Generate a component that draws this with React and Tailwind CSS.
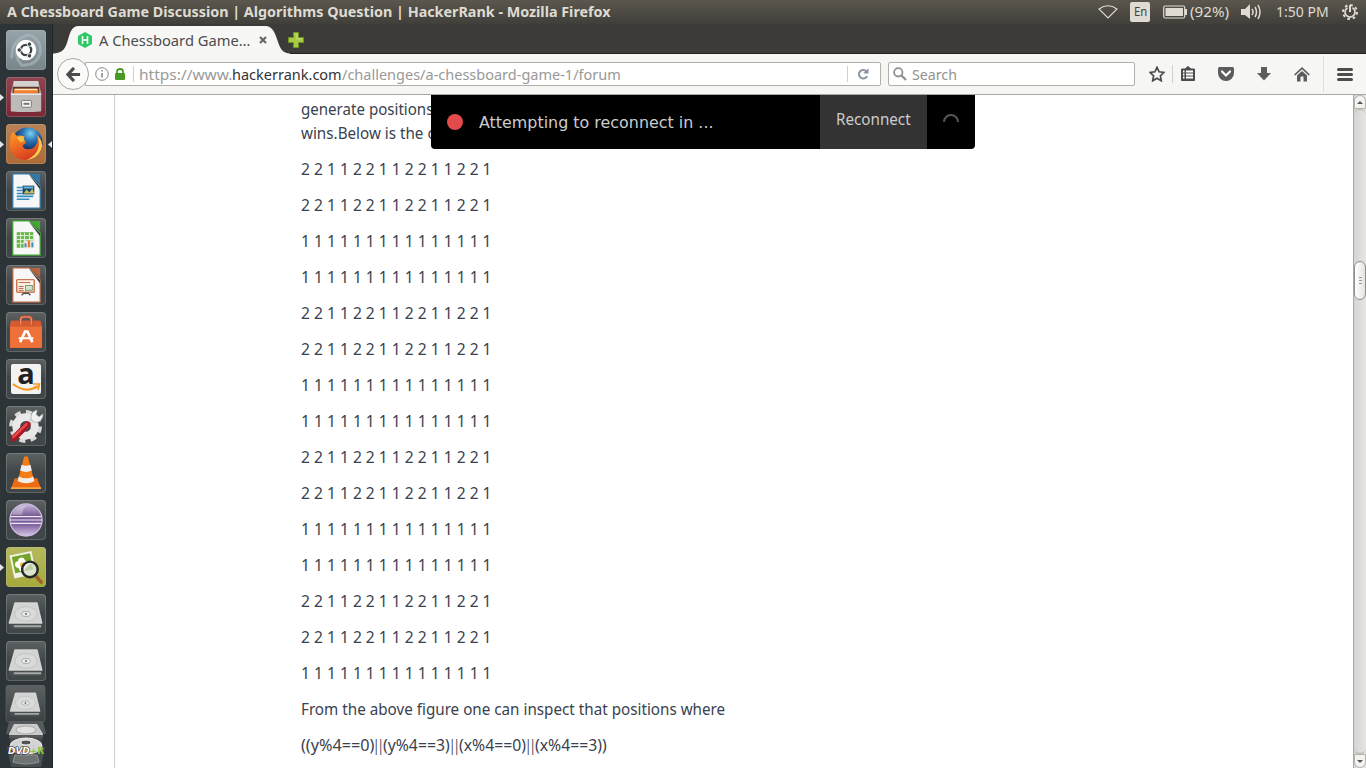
import { useLayoutEffect, useRef } from "react";

/* Text set to an exact width: the glyphs are scaled horizontally after measuring. */
function Fit({ w, className = "", children }) {
  const ref = useRef(null);
  useLayoutEffect(() => {
    const el = ref.current;
    el.style.transform = `scaleX(${w / el.offsetWidth})`;
    el.parentElement.style.width = `${w}px`;
  }, [w]);
  return (
    <span className={`inline-block shrink-0 ${className}`}>
      <span ref={ref} className="inline-block origin-left whitespace-pre">{children}</span>
    </span>
  );
}

const even = "2 2 1 1 2 2 1 1 2 2 1 1 2 2 1";
const ones = "1 1 1 1 1 1 1 1 1 1 1 1 1 1 1";
const rows = [even, even, ones, ones, even, even, ones, ones, even, even, ones, ones, even, even, ones];

function Ubuntu() {
  return (
    <svg viewBox="0 0 41 41" className="size-full">
      <path d="M6 29Q5 10 23 5Q37 9 35 24Q31 37 16 36Q8 27 12 17" fill="none" stroke="#aebbc0" strokeWidth="3" opacity=".6" />
      <circle cx="20.5" cy="20.5" r="10.5" fill="#fff" />
      <circle cx="20.5" cy="20.5" r="5.3" fill="none" stroke="#3b4448" strokeWidth="2.4" />
      <g fill="#3b4448" stroke="#fff" strokeWidth="1"><circle cx="13.6" cy="20.5" r="2.3" /><circle cx="24" cy="14.5" r="2.3" /><circle cx="24" cy="26.5" r="2.3" /></g>
    </svg>
  );
}
function Files() {
  return (
    <svg viewBox="0 0 41 41" className="size-full">
      <path d="M8 4H33L36 16V35H5V16Z" fill="#aaa5a2" />
      <path d="M8 4H33L34 12H7Z" fill="#d4d0ce" />
      <path d="M7 10H34V17H7Z" fill="#5a332b" />
      <path d="M8 12H33V17H8Z" fill="#f37e2d" /><path d="M9 12H32V13.5H9Z" fill="#ffe2ba" />
      <path d="M5 17H36V35Q20 37 5 35Z" fill="#bdbab8" /><path d="M5 17H36V18.5H5Z" fill="#e8e6e5" />
      <rect x="16" y="24" width="10" height="7" rx="1" fill="#f5f5f5" stroke="#777" /><rect x="18" y="26.5" width="6" height="2" fill="#777" />
    </svg>
  );
}
function Firefox() {
  return (
    <svg viewBox="0 0 41 41" className="size-full">
      <defs>
        <radialGradient id="ffb" cx=".6" cy=".2"><stop stopColor="#7ed0f2" /><stop offset=".5" stopColor="#2976b7" /><stop offset="1" stopColor="#173b70" /></radialGradient>
        <linearGradient id="ffo" x1="0" y1="0" x2="0.4" y2="1"><stop stopColor="#fb9d26" /><stop offset=".6" stopColor="#ed6522" /><stop offset="1" stopColor="#d73f1f" /></linearGradient>
      </defs>
      <circle cx="22" cy="19" r="15.5" fill="url(#ffb)" />
      <path d="M7 8L11 12Q16 11 19 13Q17 16 21 19L17 22Q18 26 23 26Q28 26 31 21Q34 16 31 10Q38 17 36 26Q31 37 20 37Q7 36 4 24Q3 14 7 8Z" fill="url(#ffo)" />
      <path d="M32 12Q39 18 36 26Q32 36 21 37Q31 32 33 25Q35 18 32 12Z" fill="#fbd153" />
      <path d="M11 14Q15 11 19 13Q17 16 20 17L15 19Z" fill="#f8bd43" />
    </svg>
  );
}
function Doc({ color, kind }) {
  return (
    <svg viewBox="0 0 41 41" className="size-full">
      <path d="M7 3H24L35 15V38H7Z" fill="#f7f7f7" stroke={color} strokeWidth="1.2" />
      <path d="M23 3L35 16V19Z" fill="#343b3d" />
      <path d="M25 3H35V13Z" fill={color} />
      {kind === "writer" && <g><path d="M11 17H17M11 20H17M11 23H17M11 26H28M11 29H24" stroke="#338dc6" strokeWidth="1.6" /><rect x="17" y="15" width="12" height="9" fill="#154669" /><path d="M18 23L21 19L24 22L27 18L29 23Z" fill="#c1bd63" /><path d="M18 16H28V18H18Z" fill="#66b8e1" /></g>}
      {kind === "calc" && <g><rect x="11" y="14.5" width="17" height="16" fill="#69b64c" /><path d="M11 18H28M11 22H28M11 26H28M15 15V31M19 15V31M24 15V31" stroke="#dff3d4" /><rect x="18" y="23" width="11" height="8" fill="#efe9dc" /><path d="M20 30V26M27 30V25" stroke="#348fc4" strokeWidth="2" /><path d="M23.5 30V23" stroke="#ec782d" strokeWidth="2.3" /></g>}
      {kind === "impress" && <g><rect x="11" y="15" width="18" height="13" rx="1" fill="#fff2e9" stroke="#c87851" strokeWidth="1.5" /><path d="M13 18H25M13 22H18M13 24H18M13 26H18" stroke="#b76641" /><rect x="20" y="21" width="7" height="5" fill="#d2e4cc" stroke="#799c72" /><path d="M20 28V30M16 31L18 29H23L25 31" stroke="#555" fill="none" strokeWidth="1.5" /></g>}
    </svg>
  );
}
function Software() {
  return (
    <svg viewBox="0 0 41 41" className="size-full">
      <path d="M5 9H35L37 15V37H4V15Z" fill="#e4642c" /><path d="M6 9H35L37 15H4Z" fill="#d55a2f" /><path d="M4.500 15H36.500V36.500H4.500Z" fill="#ee7139" />
      <path d="M15 13V8Q15 5 18 5H23Q26 5 26 8V13" fill="none" stroke="#b84b2d" strokeWidth="3" /><path d="M15 13V8Q15 5 18 5H23Q26 5 26 8V13" fill="none" stroke="#ef8a64" strokeWidth="1.500" />
      <path d="M14.5 31L19.5 20H22L27 31" fill="none" stroke="#fff" strokeWidth="2.8" /><path d="M13 27H28" stroke="#fff" strokeWidth="2" />
    </svg>
  );
}
function Amazon() {
  return (
    <svg viewBox="0 0 40 40" className="size-full">
      <rect x="5" y="5" width="30" height="30" rx="2" fill="#f3f3f3" />
      <text x="20" y="25" textAnchor="middle" fontFamily="Open Sans, sans-serif" fontWeight="bold" fontSize="29" fill="#222">a</text>
      <path d="M7 25Q20 35 32 27" fill="none" stroke="#f69a20" strokeWidth="2.200" /><path d="M27 25H33.500L32 31" fill="none" stroke="#f69a20" strokeWidth="1.700" />
    </svg>
  );
}
function Settings() {
  return (
    <svg viewBox="0 0 41 41" className="size-full">
      <circle cx="20" cy="21" r="14.3" fill="none" stroke="#d8d8d8" strokeWidth="5" strokeDasharray="6 5.23" />
      <circle cx="20" cy="21" r="9.5" fill="none" stroke="#e8e8e8" strokeWidth="8" />
      <path d="M17 25L29 12" stroke="#d7d9d9" strokeWidth="5" /><path d="M26 14Q24 6 32 4L31 9L34 11L38 8Q38 16 30 17Z" fill="#f0f1f1" stroke="#9fa3a4" strokeWidth=".6" />
      <path d="M8 33L22 19" stroke="#a91923" strokeWidth="6.5" strokeLinecap="round" /><path d="M7.500 32L21 18.500" stroke="#e64a4d" strokeWidth="2.5" strokeLinecap="round" />
    </svg>
  );
}
function Vlc() {
  return (
    <svg viewBox="0 0 41 41" className="size-full">
      <path d="M9 26H32L36 37H5Z" fill="#ed6b12" /><path d="M5 35H36V37H5Z" fill="#f9a43e" />
      <path d="M18.500 4Q20.500 2.500 22.500 4L29 29Q21 34 12 29Z" fill="#f57d16" />
      <path d="M16 12Q20.500 14 25 12L26.500 18Q20.500 21 14.500 18Z" fill="#eee" /><path d="M13 24Q21 28 28 24L29 29Q21 33 12 29Z" fill="#f3eee8" />
    </svg>
  );
}
function Eclipse() {
  return (
    <svg viewBox="0 0 41 41" className="size-full">
      <defs><linearGradient id="ec" x2="0" y2="1"><stop stopColor="#cbb7df" /><stop offset=".4" stopColor="#71568e" /><stop offset=".65" stopColor="#8064a0" /><stop offset="1" stopColor="#d8c6e8" /></linearGradient></defs>
      <circle cx="20.5" cy="20.5" r="16.5" fill="url(#ec)" stroke="#cdbddd" strokeWidth="1.3" />
      <path d="M5 17H36M4 20.500H37M5 24H36" stroke="#eee8f5" strokeWidth="1.2" /><path d="M13 7Q7 11 6 15H17Q16 9 22 5Z" fill="#fff" opacity=".3" />
    </svg>
  );
}
function Viewer() {
  return (
    <svg viewBox="0 0 41 41" className="size-full">
      <g transform="rotate(-12 18 19)"><rect x="6" y="6" width="23" height="24" fill="#f1f2e8" /><rect x="8" y="8" width="19" height="17" fill="#76a52c" /><g fill="#fff"><circle cx="17" cy="14" r="3.5" /><circle cx="13" cy="17" r="3.5" /><circle cx="20" cy="18" r="3.5" /><circle cx="16" cy="21" r="3.5" /></g><circle cx="17" cy="18" r="2.5" fill="#f2bd30" /></g>
      <path d="M30 29L36 36" stroke="#a15f2e" strokeWidth="3.5" strokeLinecap="round" />
      <circle cx="24.5" cy="23" r="8" fill="#d7dfcb" fillOpacity=".75" stroke="#25292a" strokeWidth="2.5" /><path d="M19 22Q21 17 26 17" stroke="#fff" fill="none" />
    </svg>
  );
}
function Disk() {
  return (
    <svg viewBox="0 0 41 41" className="size-full">
      <path d="M3 30H37V34L35 36H5L3 33Z" fill="#4b4e4f" />
      <path d="M9 9H32L37 30H3Z" fill="#d2d3d3" stroke="#eee" strokeWidth=".7" />
      <ellipse cx="20.5" cy="20.5" rx="11.5" ry="7.5" fill="#d9dada" stroke="#c2c4c4" /><ellipse cx="20.5" cy="20.5" rx="4.5" ry="2.5" fill="#ededed" stroke="#a7a9a9" /><circle cx="20.5" cy="20.5" r="1" fill="#666" />
      <path d="M8 32H36V34H8Z" fill="#a5a7a7" />
    </svg>
  );
}

const gray = "bg-linear-to-b from-[#5d6162] via-[#404547] to-[#414648]";
const apps = [
  { icon: <Ubuntu />, bg: "bg-linear-to-b from-[#97a5aa] to-[#778489]" },
  { icon: <Files />, bg: "bg-linear-to-b from-[#8e4450] to-[#7a2634]", left: true },
  { icon: <Firefox />, bg: "bg-linear-to-b from-[#b98257] to-[#ad6a35]", left: true, right: true },
  { icon: <Doc kind="writer" color="#3179a8" />, bg: gray },
  { icon: <Doc kind="calc" color="#43a932" />, bg: gray },
  { icon: <Doc kind="impress" color="#b76440" />, bg: gray },
  { icon: <Software />, bg: gray },
  { icon: <Amazon />, bg: gray },
  { icon: <Settings />, bg: gray },
  { icon: <Vlc />, bg: gray },
  { icon: <Eclipse />, bg: gray },
  { icon: <Viewer />, bg: "bg-linear-to-b from-[#b6b95c] to-[#a5a93b]", left: true },
  { icon: <Disk />, bg: gray },
  { icon: <Disk />, bg: gray },
];

function Launcher() {
  return (
    <aside className="flex w-[53px] shrink-0 flex-col gap-[6px] overflow-hidden border-r border-[#202528] bg-[#2d3437] pt-[5px]">
      {apps.map((a, i) => (
        <div key={i} className="flex h-[41px] shrink-0 items-center pt-px">
          <span className="flex w-[6px] shrink-0">{a.left && <svg className="h-[9px] w-1" viewBox="0 0 4 9"><path d="M0 1L4 4.5L0 8Z" fill="#e4e4e4" /></svg>}</span>
          <div className={`size-[40px] shrink-0 overflow-hidden rounded-[4px] shadow-[inset_0_0_0_1px_rgba(190,200,200,.25)] ${a.bg}`}>{a.icon}</div>
          {a.right && <svg className="ml-[2px] h-[9px] w-1" viewBox="0 0 4 9"><path d="M4 1L0 4.5L4 8Z" fill="#e4e4e4" /></svg>}
        </div>
      ))}
      <svg className="-mt-[2px] ml-[5px] h-[84px] w-[42px] shrink-0" viewBox="0 0 42 84">
        <defs><linearGradient id="tile" x2="0" y2="1"><stop stopColor="#5d6162" /><stop offset="1" stopColor="#3b4042" /></linearGradient></defs>
        <rect x="1" width="39" height="37" rx="3" fill="url(#tile)" stroke="#626869" strokeWidth=".6" />
        <path d="M4 36H38L41 49H1Z" fill="#55595b" /><path d="M4 49H38L36 63H6Z" fill="#45494b" /><path d="M2 62H40L36 82H6Z" fill="#4a4f51" />
        <svg x="2" y="0" width="37" height="36" viewBox="0 0 41 41"><Disk /></svg>
        <path d="M9 39H32L38 49V53H4V49Z" fill="#c9caca" /><ellipse cx="21" cy="45" rx="10" ry="4" fill="#e0e0e0" stroke="#aaa" /><path d="M4 50H38V53H4Z" fill="#545859" />
        <ellipse cx="21" cy="61" rx="16" ry="8" fill="#d2d3d2" stroke="#eee" /><ellipse cx="21" cy="57.500" rx="5" ry="2.500" fill="#555" stroke="#fff" />
        <path d="M10 70H32L34 77Q21 81 8 77Z" fill="#6e7273" stroke="#919595" />
        <text x="3" y="68.500" fontFamily="DejaVu Sans" fontWeight="bold" fontSize="9" fill="#fff" stroke="#222" strokeWidth="1.200" paintOrder="stroke" textLength="36" lengthAdjust="spacingAndGlyphs"><tspan fontStyle="italic">DVD</tspan><tspan fill="#8bc43f" strokeWidth="0">+R</tspan></text>
      </svg>
    </aside>
  );
}

function TopBar() {
  return (
    <header className="flex h-6 shrink-0 items-center bg-linear-to-b from-[#5b574e] to-[#403f3a] pl-[7px] text-[#dfdbd2]">
      <Fit w={604} className="text-[14px] leading-6 font-bold">A Chessboard Game Discussion | Algorithms Question | HackerRank - Mozilla Firefox</Fit>
      <svg className="ml-[487px] h-[14px] w-5 shrink-0" viewBox="0 0 20 14" fill="none" stroke="#dfdbd2" strokeWidth="1.1"><path d="M1 4Q10-2.5 19 4L10 13Z" /></svg>
      <span className="ml-[12px] flex h-5 w-5 items-center justify-center rounded-[2px] bg-[#dfdbd2] text-[#454139]"><Fit w={13} className="text-[13px]">En</Fit></span>
      <svg className="ml-[13px] h-[14px] w-6 shrink-0" viewBox="0 0 24 14"><rect x=".7" y="1" width="21" height="12" rx="1.5" fill="none" stroke="#dfdbd2" strokeWidth="1.2" /><rect x="2.5" y="3" width="17.5" height="8" fill="#dfdbd2" /><path d="M22 4H24V10H22" fill="#dfdbd2" /></svg>
      <Fit w={39} className="ml-[3px] text-[14px] leading-6">(92%)</Fit>
      <svg className="ml-[12px] h-4 w-5 shrink-0" viewBox="0 0 20 16"><path d="M0 5H4L9 0V15L4 11H0Z" fill="#dfdbd2" /><path d="M11 5Q13 8 11 11M14 3Q17 8 14 13M17 1Q21 8 17 15" stroke="#dfdbd2" fill="none" strokeWidth="1.5" /></svg>
      <Fit w={53} className="ml-[15px] text-[14px] leading-6">1:50 PM</Fit>
      <svg className="ml-[13px] size-4 shrink-0" viewBox="0 0 16 16" fill="none" stroke="#dfdbd2"><circle cx="8" cy="8" r="7" strokeWidth="2" strokeDasharray="2.6 2.9" /><path d="M5.5 3.7A5 5 0 1 0 10.5 3.7" strokeWidth="1.7" /><path d="M8 1V8" strokeWidth="2" /></svg>
    </header>
  );
}

function TabStrip() {
  return (
    <div className="flex h-[30px] shrink-0 items-start border-b border-[#23221f] bg-[#3d3b37]">
      <div className="relative h-[30px] w-[237px] shrink-0">
        <svg className="absolute inset-0 h-[30px] w-[237px]" viewBox="0 0 237 30"><path d="M0 30V29.5C8 29 11 27 14 19C17 9 18 2 26 2H212C220 2 222 9 225 18C228 27 231 29 237 29.5V30Z" fill="#f7f7f6" /></svg>
        <div className="relative flex h-[32px] items-center pl-[24px] text-[#4c4c4c]">
          <svg className="size-[16px] shrink-0" viewBox="0 0 15 16"><path d="M7.5 0L14.5 4V12L7.5 16L.5 12V4Z" fill="#2ec866" /><path d="M5 4V12M10 4V12M5 8H10" stroke="#fff" strokeWidth="1.6" /></svg>
          <Fit w={151} className="ml-[6px] text-[14.5px] leading-[22px]">A Chessboard Game…</Fit>
          <svg className="ml-[9px] size-[8px]" viewBox="0 0 8 8"><path d="M1 1L7 7M7 1L1 7" stroke="#666" strokeWidth="2.2" /></svg>
        </div>
      </div>
      <svg className="mt-2 -ml-[2px] size-4" viewBox="0 0 16 16"><path d="M5.5.5H10.5V5.5H15.5V10.5H10.5V15.5H5.5V10.5H.5V5.5H5.5Z" fill="#a7ca45" stroke="#6e9520" /><path d="M7 2H9V7H14" fill="none" stroke="#c9df7e" /></svg>
    </div>
  );
}

function Toolbar() {
  return (
    <div className="flex h-[41px] shrink-0 items-center border-b border-[#aaa79f] bg-[#f6f6f5] pl-[4px]">
      <div className="z-10 flex size-8 shrink-0 items-center justify-center rounded-full border border-[#aaa79f] bg-[#fafaf9]">
        <svg className="size-[15px]" viewBox="0 0 16 16"><path d="M8.5 1L2 8L8.5 15M2.5 8H15" fill="none" stroke="#4c4c4c" strokeWidth="3.3" /></svg>
      </div>
      <div className="-ml-[4px] flex h-6 w-[796px] shrink-0 items-center rounded-r-[2px] border border-[#b3b0a9] bg-white pl-[9px] text-[#999]">
        <svg className="size-[14px] shrink-0" viewBox="0 0 14 14" fill="none" stroke="#888"><circle cx="7" cy="7" r="6.3" /><path d="M7 6V10.5M7 3V4.6" strokeWidth="1.6" /></svg>
        <svg className="ml-[6px] h-3 w-[10px] shrink-0" viewBox="0 0 10 12"><path d="M2 6V3.5Q2 1 5 1Q8 1 8 3.5V6" fill="none" stroke="#4a9b25" strokeWidth="1.8" /><rect y="5" width="10" height="7" rx="1" fill="#4a9b25" /></svg>
        <span className="ml-[8px] h-4 w-px bg-[#d0d0d0]" />
        <div className="ml-[5px] flex text-[14.5px] leading-[22px]">
          <Fit w={93}>https://www.</Fit>
          <Fit w={110} className="text-[#333]">hackerrank.com</Fit>
          <Fit w={279}>/challenges/a-chessboard-game-1/forum</Fit>
        </div>
        <span className="ml-auto h-4 w-px bg-[#d0d0d0]" />
        <svg className="mr-[11px] ml-[9px] size-[12px] shrink-0" viewBox="0 0 12 12"><path d="M9.4 3.2A4.3 4.3 0 1 0 10.1 8.2" fill="none" stroke="#8792a0" strokeWidth="2" /><path d="M6.2 5.5H11.5V.2Z" fill="#8792a0" /></svg>
      </div>
      <div className="ml-[7px] flex h-6 w-[247px] shrink-0 items-center rounded-[2px] border border-[#b3b0a9] bg-white pl-[4px] text-[#929292]">
        <svg className="size-[14px]" viewBox="0 0 14 14" fill="none" stroke="#929292"><circle cx="5.3" cy="5.3" r="4.2" strokeWidth="1.8" /><path d="M8.5 8.5L13 13" strokeWidth="2.4" /></svg>
        <Fit w={45} className="ml-[5px] text-[14.5px] leading-[22px]">Search</Fit>
      </div>
      <svg className="ml-[14px] size-4 shrink-0" viewBox="0 0 16 16"><path d="M8 1.3L10.1 5.8L15 6.4L11.4 9.8L12.3 14.8L8 12.3L3.7 14.8L4.6 9.8L1 6.4L5.9 5.8Z" fill="none" stroke="#4c4c4c" strokeWidth="1.7" /></svg>
      <span className="ml-[7px] h-[18px] w-px bg-[#d0d0d0]" />
      <svg className="ml-[8px] h-4 w-[14px] shrink-0" viewBox="0 0 14 16"><path d="M.5 3H4L7 .5L10 3H13.500V14.500H.5Z" fill="#4c4c4c" stroke="#4c4c4c" strokeLinejoin="round" /><path d="M2 5.500H3.500M5 5.500H12M2 8.500H3.500M5 8.500H12M2 11.500H3.500M5 11.500H12" stroke="#fff" strokeWidth="1.8" /></svg>
      <svg className="ml-[23px] h-[14px] w-4 shrink-0" viewBox="0 0 16 14"><path d="M1.5 0H14.5Q16 0 16 1.5V6A8 8 0 0 1 0 6V1.5Q0 0 1.5 0Z" fill="#5c5c5c" /><path d="M4 4.5L8 8.5L12 4.5" fill="none" stroke="#fff" strokeWidth="2.2" strokeLinecap="round" /></svg>
      <svg className="ml-[23px] h-[14px] w-[14px] shrink-0" viewBox="0 0 14 14"><path d="M4 0H10V6H14L7 13.5L0 6H4Z" fill="#5c5c5c" /></svg>
      <svg className="ml-[23px] h-[15px] w-4 shrink-0" viewBox="0 0 16 15"><path d="M.7 8L8 1.2L15.3 8" fill="none" stroke="#5c5c5c" strokeWidth="1.7" /><path d="M3 8.500L8 4L13 8.500V14.500H9.500V9.500H6.500V14.500H3Z" fill="#5c5c5c" /></svg>
      <span className="ml-[13px] h-9 w-px bg-[#dededc]" />
      <svg className="ml-[13px] h-[13px] w-4 shrink-0" viewBox="0 0 16 13"><path d="M1.5 1.5H14.5M1.5 6.5H14.5M1.5 11.5H14.5" stroke="#4c4c4c" strokeWidth="3" strokeLinecap="round" /></svg>
    </div>
  );
}

function Scrollbar() {
  return (
    <div className="flex w-[13px] shrink-0 flex-col border-l border-[#aaa7a1] bg-linear-to-r from-[#d5d4d2] to-[#e6e5e4]">
      <div className="flex h-[14px] items-center justify-center rounded-t-full border border-[#b5b2ac] bg-[#f3f3f2]"><svg className="h-[3px] w-[6px]" viewBox="0 0 6 3"><path d="M0 3L3 0L6 3Z" fill="#555" /></svg></div>
      <div className="flex h-[152px] shrink-0 rounded-t-full border-t border-[#b5b2ac]" />
      <div className="flex h-[39px] shrink-0 flex-col items-center justify-center gap-[2px] rounded-full border border-[#918e88] bg-linear-to-r from-white to-[#e5e4e2]"><i className="h-px w-[3px] bg-[#999]" /><i className="h-px w-[3px] bg-[#999]" /><i className="h-px w-[3px] bg-[#999]" /></div>
      <div className="grow rounded-b-full border-b border-[#b5b2ac]" />
      <div className="flex h-[14px] items-center justify-center rounded-b-full border border-[#b5b2ac] bg-[#f3f3f2]"><svg className="h-[3px] w-[6px]" viewBox="0 0 6 3"><path d="M0 0L3 3L6 0Z" fill="#555" /></svg></div>
    </div>
  );
}

function ReconnectBar() {
  return (
    <div className="absolute top-0 left-[378px] flex h-[54px] w-[544px] overflow-hidden rounded-b-[4px] bg-black text-[#ccc]">
      <div className="flex w-[389px] items-center pl-4">
        <span className="size-4 rounded-full bg-[#e34a4c]" />
        <Fit w={235} className="ml-4 pt-[3px] font-['DejaVu_Sans',sans-serif] text-[15.5px]">Attempting to reconnect in ...</Fit>
      </div>
      <div className="flex w-[107px] justify-center bg-[#333] pt-[12px]"><Fit w={75} className="text-[16px] leading-6">Reconnect</Fit></div>
      <div className="flex grow justify-center pt-[18px]"><svg className="size-4" viewBox="0 0 16 16"><path d="M1 9A7 7 0 0 1 15 9" fill="none" stroke="#555" strokeWidth="2" /></svg></div>
    </div>
  );
}

export default function App() {
  return (
    <div className="flex h-[768px] w-[1366px] flex-col overflow-hidden bg-white font-['Noto_Sans',sans-serif]">
      <TopBar />
      <div className="flex min-h-0 grow">
        <Launcher />
        <div className="flex w-[1313px] flex-col">
          <TabStrip />
          <Toolbar />
          <div className="relative flex min-h-0 grow">
            <div className="w-[62px] shrink-0 border-r border-[#ccc]" />
            <main className="flex min-w-0 grow flex-col gap-3 overflow-hidden pt-[2px] pl-[186px] text-[16px] leading-6 text-[#39424e]">
              <p className="flex flex-col items-start">
                <Fit w={132} className="h-6">generate positions</Fit>
                <Fit w={134} className="h-6">wins.Below is the c</Fit>
              </p>
              {rows.map((r, i) => <p key={i} className="flex h-6 shrink-0"><Fit w={191}>{r}</Fit></p>)}
              <p className="flex h-6 shrink-0"><Fit w={424}>From the above figure one can inspect that positions where</Fit></p>
              <p className="flex h-6 shrink-0">
                <Fit w={73}>((y%4==0)</Fit>
                <Fit w={9} className="font-bold">||</Fit>
                <Fit w={67}>(y%4==3)</Fit>
                <Fit w={9} className="font-bold">||</Fit>
                <Fit w={67}>(x%4==0)</Fit>
                <Fit w={9} className="font-bold">||</Fit>
                <Fit w={72}>(x%4==3))</Fit>
              </p>
            </main>
            <Scrollbar />
            <ReconnectBar />
          </div>
        </div>
      </div>
    </div>
  );
}
